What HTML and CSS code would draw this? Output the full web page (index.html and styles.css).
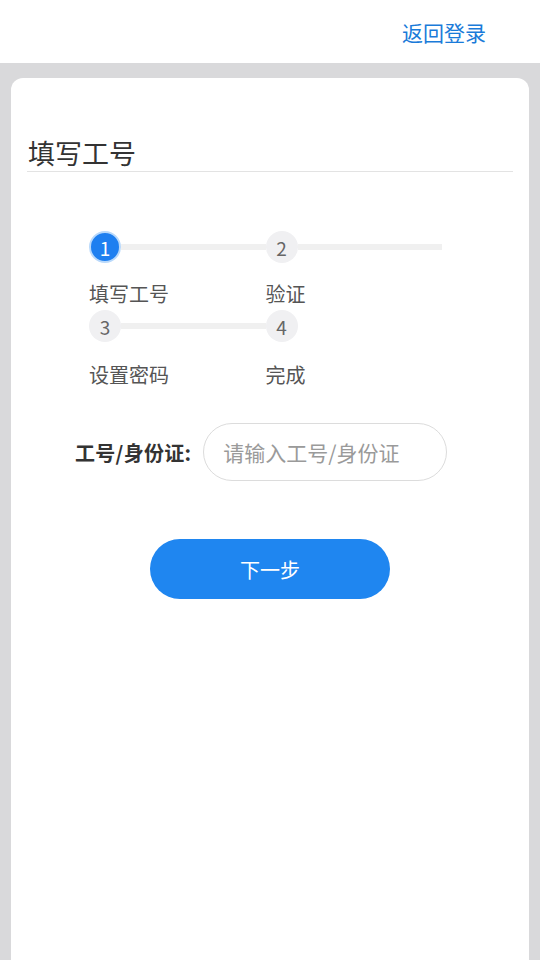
FILE: index.html
```html
<!DOCTYPE html>
<html lang="zh-CN">
<head>
    <meta charset="UTF-8">
    <meta name="viewport" content="width=device-width, initial-scale=1.0">
    <link rel="stylesheet" href="styles.css">
    <title>找回密码</title>
</head>
<body>

    <div class="top-bar">
        <a class="back-login" href="#">返回登录</a>
    </div>

    <div class="card">
        <div class="card-title">填写工号</div>

        <!-- step indicator -->
        <div class="steps">
            <div class="step active">
                <div class="step-head"><span class="step-num">1</span><span class="step-line"></span></div>
                <div class="step-label">填写工号</div>
            </div>
            <div class="step">
                <div class="step-head"><span class="step-num">2</span><span class="step-line"></span></div>
                <div class="step-label">验证</div>
            </div>
            <div class="step">
                <div class="step-head"><span class="step-num">3</span><span class="step-line"></span></div>
                <div class="step-label">设置密码</div>
            </div>
            <div class="step last">
                <div class="step-head"><span class="step-num">4</span><span class="step-line"></span></div>
                <div class="step-label">完成</div>
            </div>
        </div>

        <div class="form-row">
            <label for="workNo">工号/身份证:</label>
            <input type="text" id="workNo" placeholder="请输入工号/身份证">
        </div>

        <button class="next-btn">下一步</button>
    </div>

</body>
</html>
```

FILE: styles.css
```css
body {
    font-family: "Noto Sans CJK SC", "Noto Sans", sans-serif;
    background-color: #d9d9db;
    margin: 0;
    height: 100vh;
    overflow: hidden;
}

.top-bar {
    background-color: #fff;
    height: 63px;
    display: flex;
    align-items: center;
    justify-content: flex-end;
    padding-right: 54px;
}

.back-login {
    color: #1a7bd9;
    font-size: 21px;
    text-decoration: none;
}

.card {
    background-color: #fff;
    margin: 15px 11px 0;
    border-radius: 12px 12px 0 0;
    padding: 57px 16px 0;
    height: 825px;
}

.card-title {
    font-size: 27px;
    color: #333;
    line-height: 36px;
    padding: 0 0 0 1px;
    border-bottom: 1px solid #e3e3e3;
}

/* Steps */
.steps {
    display: flex;
    flex-wrap: wrap;
    width: 353px;
    margin: 59px 0 0 62px;
    row-gap: 4px;
}

.step {
    width: 50%;
}

.step-head {
    display: flex;
    align-items: center;
}

.step-num {
    width: 32px;
    height: 32px;
    border-radius: 50%;
    background-color: #f0f0f2;
    color: #666;
    font-size: 19px;
    display: flex;
    align-items: center;
    justify-content: center;
    box-sizing: border-box;
    flex-shrink: 0;
}

.step.active .step-num {
    background-color: #1e7ff0;
    color: #fff;
    border: 2px solid #b9d9fb;
}

.step-line {
    flex: 1;
    height: 6px;
    background-color: #f0f0f0;
}

.step.last .step-line {
    visibility: hidden;
}

.step-label {
    font-size: 20px;
    color: #555;
    line-height: 24px;
    margin-top: 19px;
}

.step:nth-child(n+3) .step-label {
    margin-top: 21px;
}

/* Form */
.form-row {
    display: flex;
    align-items: center;
    margin: 36px 0 0 48px;
}

.form-row label {
    font-size: 20px;
    font-weight: bold;
    color: #333;
    margin-right: 12px;
    letter-spacing: 0.3px;
}

.form-row input {
    width: 244px;
    height: 58px;
    box-sizing: border-box;
    border: 1px solid #dcdcdc;
    border-radius: 29px;
    padding: 0 19px;
    font-size: 21px;
    font-family: inherit;
    outline: none;
}

.form-row input::placeholder {
    color: #9a9a9a;
}

.next-btn {
    display: block;
    width: 240px;
    height: 60px;
    margin: 58px auto 0;
    background-color: #1f86f0;
    color: #fff;
    border: none;
    border-radius: 30px;
    font-size: 20px;
    font-family: inherit;
    cursor: pointer;
}
```
